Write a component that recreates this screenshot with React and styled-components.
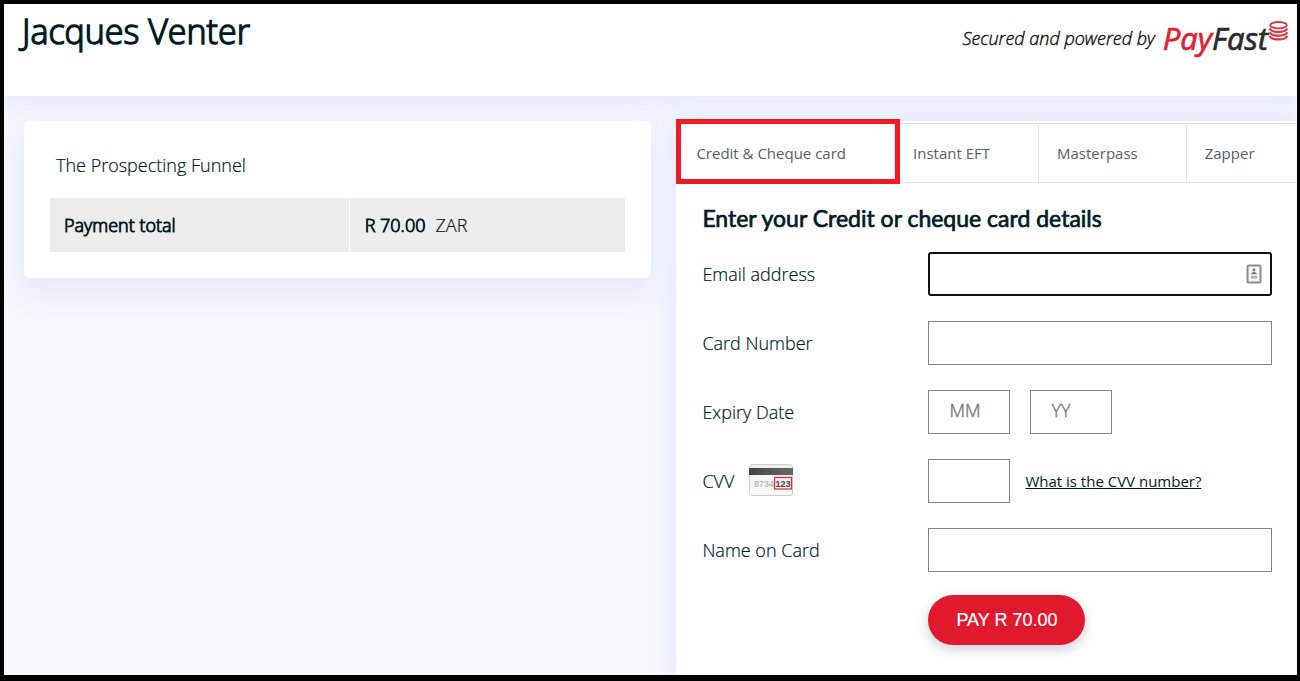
import React from "react";
import styled, { createGlobalStyle } from "styled-components";

const Global = createGlobalStyle`
  *, *::before, *::after { box-sizing: border-box; }
  body {
    margin: 0;
    color: #001b26;
    font-family: "Open Sans", sans-serif;
    font-size: 18px;
    font-weight: 300;
    line-height: 24px;
    -webkit-text-stroke: 0.2px currentColor;
  }
`;

const Page = styled.div`
  min-height: 100vh;
  display: flex;
  flex-direction: column;
  overflow: hidden;
  border: solid #000;
  border-width: 4px 3px 6px 4px;
  background: #f8f9ff;
`;

const Header = styled.header`
  display: flex;
  justify-content: space-between;
  align-items: flex-start;
  height: 92px;
  padding: 4px 8px 0 18px;
  background: #fff;
  box-shadow: 0 4px 24px 6px #e6eafd;
`;

const Merchant = styled.h1`
  margin: 0;
  font-size: 34px;
  line-height: 46px;
  font-weight: 300;
  -webkit-text-stroke: 1.4px currentColor;
`;

const Powered = styled.div`
  display: flex;
  align-items: center;
  gap: 8px;
  padding-top: 12px;
  font-size: 18px;
  font-style: italic;
  color: #111;
  -webkit-text-stroke: 0.4px currentColor;
`;

const Logo = styled.a`
  display: flex;
  align-items: flex-start;
  color: #2b2b2b;
  font-size: 31px;
  line-height: 36px;
  font-weight: 400;
  text-decoration: none;
  -webkit-text-stroke: 0.7px currentColor;
`;

const LogoRed = styled.span`
  color: #dd2433;
`;

const Content = styled.main`
  flex: 1;
  display: flex;
  padding-top: 25px;
  overflow: hidden;
`;

const Summary = styled.section`
  flex: 1;
  min-width: 0;
  padding: 0 25px 0 20px;
`;

const SummaryCard = styled.div`
  padding: 26px;
  border-radius: 6px;
  background: #fff;
  box-shadow: 0 12px 32px 4px #e3e8fc;
`;

const ItemName = styled.p`
  margin: 6px 6px 21px;
`;

const Totals = styled.table`
  width: 100%;
  border-collapse: collapse;
  table-layout: fixed;
`;

const TotalLabel = styled.th`
  width: 52%;
  height: 54px;
  padding: 0 14px;
  border-right: 1px solid #fff;
  background: #ececec;
  text-align: left;
  font-weight: 300;
  -webkit-text-stroke: 0.9px currentColor;
`;

const TotalValue = styled.td`
  padding: 0 15px;
  background: #ececec;
`;

const Amount = styled.strong`
  margin-right: 10px;
  font-weight: 300;
  -webkit-text-stroke: 0.9px currentColor;
`;

const Panel = styled.section`
  position: relative;
  width: 48%;
  padding-top: 2px;
  background: #fff;
  box-shadow: 0 0 24px 4px #e0e7fd;
`;

const Tabs = styled.nav`
  display: flex;
  overflow: hidden;
  height: 60px;
  padding-left: 2px;
  border: solid #dee2e6;
  border-width: 1px 0;
`;

const Tab = styled.button`
  flex: none;
  padding: 0 48px 0 18px;
  border: 0;
  border-right: 1px solid #dee2e6;
  background: none;
  color: #56606a;
  font: inherit;
  font-size: 15px;
  font-weight: 400;
  -webkit-text-stroke: 0;
  &:last-child { border-right: 0; }
`;

const Highlight = styled.div`
  position: absolute;
  top: -2px;
  left: 0;
  width: 224px;
  height: 65px;
  border: 5px solid #ed1c24;
  pointer-events: none;
`;

const Form = styled.form`
  padding: 20px 25px 24px 26px;
`;

const Heading = styled.h2`
  margin: 0 0 17px;
  font-family: Lato, sans-serif;
  font-size: 23px;
  line-height: 30px;
  padding-bottom: 2px;
  font-weight: 400;
  -webkit-text-stroke: 0.7px currentColor;
`;

const Row = styled.div`
  display: flex;
  align-items: center;
  margin-bottom: 25px;
`;

const Label = styled.label`
  display: flex;
  align-items: center;
  gap: 15px;
  flex: none;
  width: 226px;
`;

const Field = styled.div`
  position: relative;
  display: flex;
  align-items: center;
  flex: 1;
  gap: ${(p) => p.$gap || 0}px;
`;

const Input = styled.input`
  width: ${(p) => (p.$short ? "82px" : "100%")};
  height: 44px;
  padding: 0 20px 4px;
  border: ${(p) => (p.$active ? "2px solid #101010" : "1px solid #858585")};
  border-radius: ${(p) => (p.$active ? 3 : 0)}px;
  background: #fff;
  color: inherit;
  font: inherit;
  outline: none;
  &::placeholder {
    color: #757575;
    opacity: 1;
    -webkit-text-stroke: 0.4px currentColor;
  }
`;

const Autofill = styled.svg`
  position: absolute;
  right: 10px;
`;

const HelpLink = styled.a`
  color: inherit;
  font-size: 15px;
  font-weight: 400;
  -webkit-text-stroke: 0;
`;

const Pay = styled.button`
  display: block;
  height: 50px;
  margin: -2px 0 0 226px;
  padding: 0 28px;
  border: 0;
  border-radius: 25px;
  background: #e1192d;
  box-shadow: 0 4px 12px rgba(20, 30, 80, 0.22);
  color: #fff;
  font-family: "Liberation Sans", sans-serif;
  font-size: 18px;
`;

const Coins = () => (
  <svg width="21" height="22" viewBox="0 0 21 22" fill="none" stroke="#e2343c" aria-hidden="true">
    <ellipse cx="10.5" cy="5.2" rx="8.3" ry="3.2" strokeWidth="1.8" />
    <path d="M1.6 8.4C4 13 17 13 19.4 8.4M1.6 12.2C4 16.8 17 16.8 19.4 12.2M1.6 16C4 20.6 17 20.6 19.4 16" strokeWidth="2.2" />
  </svg>
);

const CardIcon = () => (
  <svg width="46" height="34" viewBox="0 0 46 34" role="img" aria-label="Card security code">
    <defs>
      <linearGradient id="face" x1="0" y1="0" x2="0" y2="1">
        <stop offset="0" stopColor="#f0f0f0" />
        <stop offset="1" stopColor="#fafafa" />
      </linearGradient>
      <linearGradient id="stripe" x1="0" y1="0" x2="1" y2="0">
        <stop offset="0" stopColor="#444" />
        <stop offset="1" stopColor="#6a6a6a" />
      </linearGradient>
    </defs>
    <rect x="0.5" y="0.5" width="43" height="31" rx="2.5" fill="url(#face)" stroke="#cfcfcf" />
    <rect x="0" y="4" width="44" height="7" fill="url(#stripe)" />
    <text x="5" y="23" fontFamily="Liberation Sans, sans-serif" fontSize="9" fontWeight="700" fill="#bbb">8734</text>
    <rect x="25.5" y="13.5" width="17" height="11.5" fill="#eee" stroke="#f22" strokeWidth="1.2" />
    <text x="26.5" y="23" fontFamily="Liberation Sans, sans-serif" fontSize="9" fontWeight="700" fill="#444">123</text>
  </svg>
);

const TABS = ["Credit & Cheque card", "Instant EFT", "Masterpass", "Zapper"];

export default function App() {
  return (
    <Page>
      <Global />
      <Header>
        <Merchant>Jacques Venter</Merchant>
        <Powered>
          Secured and powered by
          <Logo href="#payfast">
            <LogoRed>Pay</LogoRed>Fast
            <Coins />
          </Logo>
        </Powered>
      </Header>
      <Content>
        <Summary>
          <SummaryCard>
            <ItemName>The Prospecting Funnel</ItemName>
            <Totals>
              <tbody>
                <tr>
                  <TotalLabel scope="row">Payment total</TotalLabel>
                  <TotalValue><Amount>R 70.00</Amount>ZAR</TotalValue>
                </tr>
              </tbody>
            </Totals>
          </SummaryCard>
        </Summary>
        <Panel>
          <Tabs>
            {TABS.map((name) => <Tab key={name} type="button">{name}</Tab>)}
          </Tabs>
          <Highlight />
          <Form>
            <Heading>Enter your Credit or cheque card details</Heading>
            <Row>
              <Label htmlFor="email">Email address</Label>
              <Field>
                <Input id="email" type="email" $active />
                <Autofill width="16" height="20" viewBox="0 0 16 20" aria-hidden="true">
                  <rect x="1.5" y="1.5" width="13" height="17" rx="1" fill="#f4f4f4" stroke="#8c8c8c" strokeWidth="2" />
                  <circle cx="8" cy="6" r="1.4" fill="#777" />
                  <path d="M5.3 10.2c0-3 5.4-3 5.4 0z" fill="#777" />
                  <path d="M5 13.2h6" stroke="#b4b4b4" strokeWidth="2.6" />
                </Autofill>
              </Field>
            </Row>
            <Row>
              <Label htmlFor="number">Card Number</Label>
              <Field><Input id="number" /></Field>
            </Row>
            <Row>
              <Label htmlFor="month">Expiry Date</Label>
              <Field $gap={20}>
                <Input id="month" placeholder="MM" $short />
                <Input aria-label="Expiry year" placeholder="YY" $short />
              </Field>
            </Row>
            <Row>
              <Label htmlFor="cvv">CVV <CardIcon /></Label>
              <Field $gap={15}>
                <Input id="cvv" $short />
                <HelpLink href="#cvv">What is the CVV number?</HelpLink>
              </Field>
            </Row>
            <Row>
              <Label htmlFor="name">Name on Card</Label>
              <Field><Input id="name" /></Field>
            </Row>
            <Pay type="submit">PAY R 70.00</Pay>
          </Form>
        </Panel>
      </Content>
    </Page>
  );
}
